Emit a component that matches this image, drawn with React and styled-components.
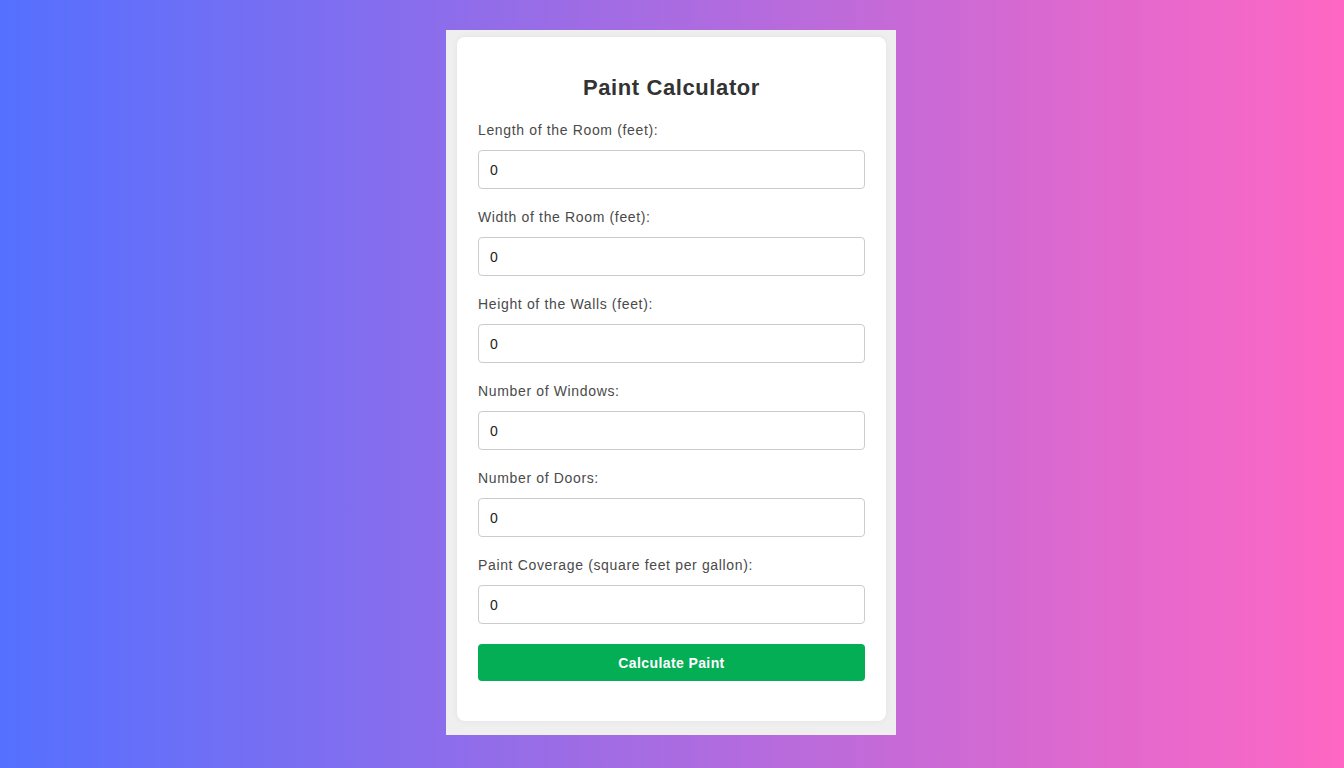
import React from 'react';
import styled, { createGlobalStyle } from 'styled-components';

const GlobalStyle = createGlobalStyle`
   html, body {
      margin: 0;
      padding: 0;
   }
   body {
      font-family: "Liberation Sans", Arial, sans-serif;
      background: linear-gradient(to right, #5470ff, #ff67c3);
      min-height: 768px;
   }
`;

const fields = [
   'Length of the Room (feet):',
   'Width of the Room (feet):',
   'Height of the Walls (feet):',
   'Number of Windows:',
   'Number of Doors:',
   'Paint Coverage (square feet per gallon):'
];

const App = () => {
   return (
      <Page>
         <GlobalStyle />
         <Frame>
            <Card>
               <Title>Paint Calculator</Title>
               {fields.map(label => (
                  <Field key={label}>
                     <Label>{label}</Label>
                     <Input type="number" defaultValue="0" />
                  </Field>
               ))}
               <Button>Calculate Paint</Button>
            </Card>
         </Frame>
      </Page>
   );
}

export default App;

const Page = styled.div`
   width: 100%;
   min-height: 768px;
   display: flex;
   justify-content: center;
   align-items: flex-start;
   padding: 30px 2px 0 0;
   box-sizing: border-box;
`;

const Frame = styled.div`
   width: 450px;
   background: #efefef;
   padding: 7px 10px 14px 11px;
   box-sizing: border-box;
`;

const Card = styled.div`
   background: #fff;
   border-radius: 8px;
   padding: 20px 21px 40px;
   box-shadow: 0 0 6px rgba(0, 0, 0, 0.06);
`;

const Title = styled.h2`
   margin: 18px 0 22px;
   text-align: center;
   font-size: 22px;
   line-height: 25px;
   font-weight: bold;
   letter-spacing: 0.6px;
   color: #333;
`;

const Field = styled.div`
   display: flex;
   flex-direction: column;
   margin-bottom: 20px;
`;

const Label = styled.label`
   font-size: 14px;
   line-height: 16px;
   letter-spacing: 0.65px;
   color: #4a4a4a;
   margin-bottom: 12px;
`;

const Input = styled.input`
   height: 39px;
   box-sizing: border-box;
   border: 1px solid #ccc;
   border-radius: 4px;
   padding: 0 11px;
   font-family: "Liberation Sans", Arial, sans-serif;
   font-size: 14px;
   color: #222;
   outline: none;
   -moz-appearance: textfield;
   &::-webkit-outer-spin-button,
   &::-webkit-inner-spin-button {
      -webkit-appearance: none;
      margin: 0;
   }
`;

const Button = styled.button`
   display: block;
   width: 100%;
   height: 37px;
   background: #03ae55;
   border: 0;
   border-radius: 4px;
   color: #fff;
   font-family: "Liberation Sans", Arial, sans-serif;
   font-size: 14px;
   font-weight: bold;
   letter-spacing: 0.4px;
   cursor: pointer;
`;
